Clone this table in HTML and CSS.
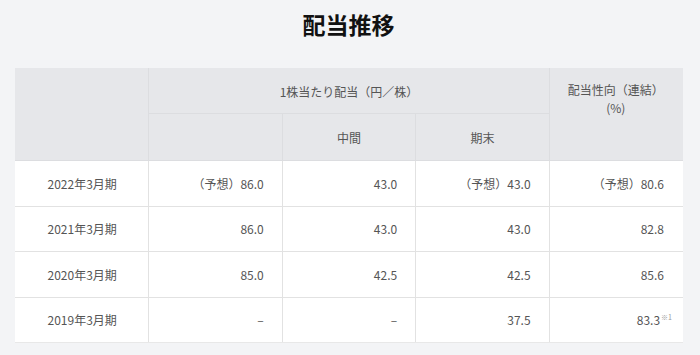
FILE: index.html
```html
<!DOCTYPE html>
<html lang="ja">
<head>
<meta charset="utf-8">
<link rel="stylesheet" href="styles.css">
</head>
<body>
<main class="page">
  <h1 class="title">配当推移</h1>
  <table class="div-table">
    <colgroup>
      <col class="c"><col class="c"><col class="c"><col class="c"><col class="c">
    </colgroup>
    <thead>
      <tr class="h1">
        <th rowspan="2"></th>
        <th colspan="3">1株当たり配当（円／株）</th>
        <th rowspan="2" class="top">配当性向（連結）<br>(%)</th>
      </tr>
      <tr class="h2">
        <th></th>
        <th>中間</th>
        <th>期末</th>
      </tr>
    </thead>
    <tbody>
      <tr><td class="yr">2022年3月期</td><td>（予想）86.0</td><td>43.0</td><td>（予想）43.0</td><td>（予想）80.6</td></tr>
      <tr><td class="yr">2021年3月期</td><td>86.0</td><td>43.0</td><td>43.0</td><td>82.8</td></tr>
      <tr><td class="yr">2020年3月期</td><td>85.0</td><td>42.5</td><td>42.5</td><td>85.6</td></tr>
      <tr><td class="yr">2019年3月期</td><td>–</td><td>–</td><td>37.5</td><td>83.3<sup class="note">※1</sup></td></tr>
    </tbody>
  </table>
</main>
</body>
</html>
```

FILE: styles.css
```css
html, body {
  margin: 0;
  padding: 0;
  background: #f3f4f6;
}
body {
  font-family: "Noto Sans CJK JP", "Noto Sans", sans-serif;
  color: #555;
}
.page {
  padding: 0 18px 0 15px;
}
.title {
  margin: 0;
  padding-top: 8px;
  height: 60px;
  box-sizing: border-box;
  text-align: center;
  font-size: 23px;
  font-weight: 700;
  color: #111;
  line-height: 32px;
}
.div-table {
  width: 667px;
  border-collapse: collapse;
  table-layout: fixed;
  font-size: 12px;
  margin-top: 8px;
}
.div-table col.c {
  width: 133.4px;
}
.div-table th {
  background: #e6e7ea;
  font-weight: 400;
  color: #555;
  border: 1px solid #dcdde0;
  text-align: center;
  padding: 0;
}
.div-table tr.h1 th { height: 44px; }
.div-table tr.h2 th { height: 46px; }
.div-table th.top {
  vertical-align: top;
  padding-top: 12px;
  line-height: 18px;
}
.div-table thead tr.h1 th:first-child { border-left-color: #e6e7ea; border-top-color: #e6e7ea; }
.div-table thead tr.h1 th:last-child { border-right-color: #e6e7ea; border-top-color: #e6e7ea; }
.div-table thead tr.h1 th:nth-child(2) { border-top-color: #e6e7ea; }
.div-table td {
  background: #fff;
  border: 1px solid #e2e2e2;
  height: 44.5px;
  padding: 0 18px 0 0;
  text-align: right;
}
.div-table td:first-child { border-left-color: #fff; }
.div-table td:last-child { border-right-color: #fff; }
.div-table tbody tr:last-child td { border-bottom-color: #e8e8e8; }
.div-table td.yr {
  text-align: center;
  padding: 0;
}
.note {
  font-size: 7px;
  color: #999;
  vertical-align: 5px;
  line-height: 0;
  margin-left: 1px;
  margin-right: -8px;
}
```
